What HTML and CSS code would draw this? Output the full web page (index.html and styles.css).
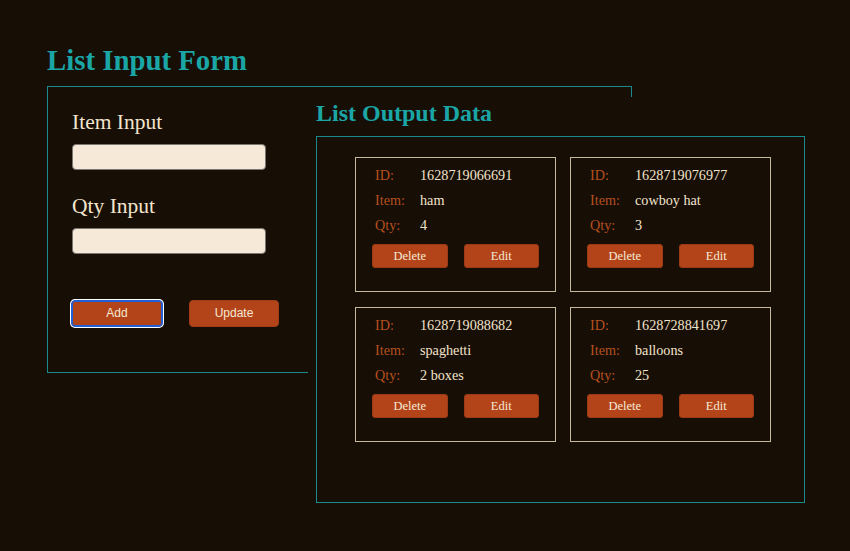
FILE: index.html
```html
<!DOCTYPE html>
<html lang="en">
<head>
<meta charset="utf-8">
<title>List Input Form</title>
<link rel="stylesheet" href="styles.css">
</head>
<body>
<div class="page">
  <h1 class="title">List Input Form</h1>
  <form class="input-form">
    <label class="field-label" for="item">Item Input</label>
    <input class="field-input" id="item" type="text">
    <label class="field-label field-label-second" for="qty">Qty Input</label>
    <input class="field-input" id="qty" type="text">
    <div class="form-actions">
      <button type="button" class="btn btn-focus">Add</button>
      <button type="button" class="btn">Update</button>
    </div>
  </form>

  <section class="output">
    <h2 class="output-title">List Output Data</h2>
    <div class="output-box">
      <div class="card">
        <div class="row"><span class="key">ID:</span><span class="val">1628719066691</span></div>
        <div class="row"><span class="key">Item:</span><span class="val">ham</span></div>
        <div class="row"><span class="key">Qty:</span><span class="val">4</span></div>
        <div class="card-actions"><button type="button" class="card-btn">Delete</button><button type="button" class="card-btn">Edit</button></div>
      </div>
      <div class="card">
        <div class="row"><span class="key">ID:</span><span class="val">1628719076977</span></div>
        <div class="row"><span class="key">Item:</span><span class="val">cowboy hat</span></div>
        <div class="row"><span class="key">Qty:</span><span class="val">3</span></div>
        <div class="card-actions"><button type="button" class="card-btn">Delete</button><button type="button" class="card-btn">Edit</button></div>
      </div>
      <div class="card">
        <div class="row"><span class="key">ID:</span><span class="val">1628719088682</span></div>
        <div class="row"><span class="key">Item:</span><span class="val">spaghetti</span></div>
        <div class="row"><span class="key">Qty:</span><span class="val">2 boxes</span></div>
        <div class="card-actions"><button type="button" class="card-btn">Delete</button><button type="button" class="card-btn">Edit</button></div>
      </div>
      <div class="card">
        <div class="row"><span class="key">ID:</span><span class="val">1628728841697</span></div>
        <div class="row"><span class="key">Item:</span><span class="val">balloons</span></div>
        <div class="row"><span class="key">Qty:</span><span class="val">25</span></div>
        <div class="card-actions"><button type="button" class="card-btn">Delete</button><button type="button" class="card-btn">Edit</button></div>
      </div>
    </div>
  </section>
</div>
</body>
</html>
```

FILE: styles.css
```css
html, body {
  margin: 0;
  padding: 0;
  background: #170e06;
}
body {
  font-family: "Liberation Serif", "Times New Roman", serif;
  color: #f3e4cc;
  width: 850px;
  height: 551px;
  overflow: hidden;
}
.page {
  position: relative;
  padding: 46px 0 0 47px;
}
.title {
  margin: 0;
  font-size: 28.8px;
  line-height: 28.8px;
  font-weight: bold;
  color: #1ba6a6;
}
.input-form {
  box-sizing: border-box;
  margin-top: 11px;
  width: 585px;
  height: 287px;
  border: 1px solid #1a8a8c;
  padding: 22px 0 0 23px;
  display: flex;
  flex-direction: column;
  align-items: flex-start;
}
.field-label {
  display: block;
  font-size: 21.5px;
  line-height: 26px;
  color: #f3e4cc;
  padding-left: 1px;
}
.field-label-second {
  margin-top: 23px;
}
.field-input {
  box-sizing: border-box;
  margin: 9px 0 0 1px;
  width: 194px;
  height: 26px;
  background: #f6e9d8;
  border: 1px solid #7b7672;
  border-radius: 4px;
  padding: 0 6px;
}
.form-actions {
  display: flex;
  gap: 28px;
  margin-top: 46px;
}
.btn {
  box-sizing: border-box;
  width: 90px;
  height: 27px;
  background: #b3441a;
  border: 1px solid #a13c16;
  border-radius: 4px;
  color: #f6e8d4;
  font-family: "Liberation Sans", Arial, sans-serif;
  font-size: 12px;
  padding: 0;
}
.btn-focus {
  width: 92px;
  border-color: #1f5fd8;
  box-shadow: inset 0 0 0 1px #1f5fd8, 0 0 0 1px #ffffff;
}
.btn-focus + .btn {
  margin-left: -2px;
}

.output {
  position: absolute;
  left: 308px;
  top: 97px;
  background: #170e06;
  padding: 4px 40px 40px 8px;
}
.output-title {
  margin: 0;
  font-size: 24px;
  line-height: 24px;
  font-weight: bold;
  color: #1ba6a6;
}
.output-box {
  box-sizing: border-box;
  margin-top: 11px;
  width: 489px;
  height: 367px;
  border: 1px solid #1a8a8c;
  padding: 20px 0 0 38px;
  display: grid;
  grid-template-columns: 201px 201px;
  grid-auto-rows: 135px;
  column-gap: 14px;
  row-gap: 15px;
  align-content: start;
}
.card {
  box-sizing: border-box;
  border: 1px solid #c9b99c;
  padding: 5px 16px 0 16px;
}
.row {
  display: flex;
  padding-left: 3px;
  font-size: 14.2px;
  line-height: 25px;
}
.key {
  width: 45px;
  flex: none;
  color: #b5501f;
}
.val {
  color: #f3e4cc;
}
.card-actions {
  display: flex;
  gap: 16px;
  margin-top: 6px;
}
.card-btn {
  box-sizing: border-box;
  width: 75.5px;
  height: 24px;
  background: #b3441a;
  border: 1px solid #9c3a15;
  border-radius: 3px;
  color: #f6e8d4;
  font-family: "Liberation Serif", "Times New Roman", serif;
  font-size: 12.5px;
  padding: 0;
}
```
